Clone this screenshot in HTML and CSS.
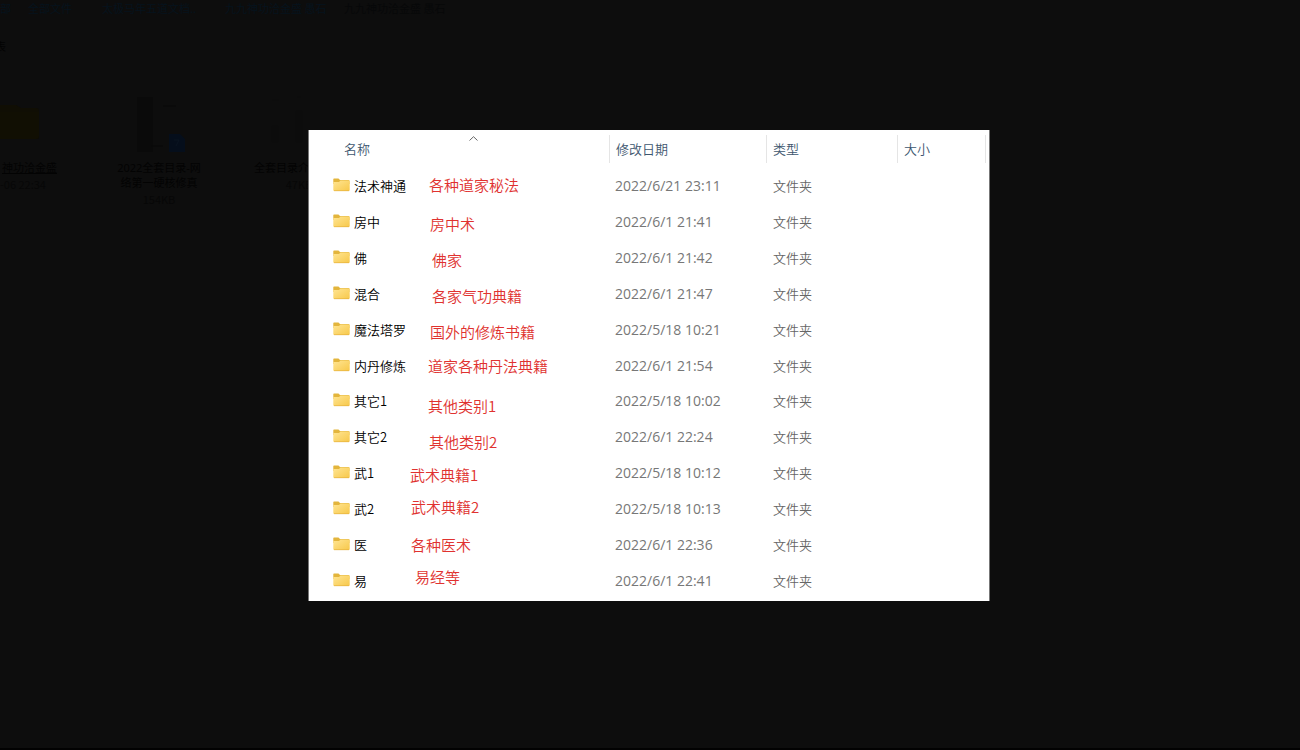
FILE: index.html
```html
<!DOCTYPE html>
<html lang="zh-CN">
<head>
<meta charset="utf-8">
<title>全部文件</title>
<link rel="stylesheet" href="styles.css">
</head>
<body>
<svg class="sprite" aria-hidden="true">
  <defs>
    <linearGradient id="folder-front" x1="0" y1="0" x2="1" y2="1">
      <stop offset="0" stop-color="#ffe593"/>
      <stop offset="1" stop-color="#f7c84a"/>
    </linearGradient>
  </defs>
  <symbol id="folder" viewBox="0 0 17 14">
    <path d="M1 .500h4.500l1.500 1.500H15.500a1 1 0 0 1 1 1V6H.300V1.200Q.300 .500 1 .500z" fill="#e3b53c"/>
    <path d="M.300 4H6L7.500 2.500H16a.700.700 0 0 1 .700.700V12a1 1 0 0 1-1 1H1.300a1 1 0 0 1-1-1z" fill="url(#folder-front)"/>
    <path d="M1 12.700h15" stroke="#e6b23d" stroke-width=".7"/>
  </symbol>
</svg>

<div class="drive">
  <nav class="crumbs" aria-label="路径">
    <a href="#">部</a>
    <a href="#">全部文件</a>
    <a href="#">太极马年五道文档..</a>
    <a href="#">九九神功洽金盛 愚石</a>
    <span>九九神功洽金盛 愚石</span>
  </nav>
  <p class="section">表</p>
  <div class="files">
    <div class="file first">
      <svg class="thumb" viewBox="10 0 60 60" aria-hidden="true"><path d="M8 12Q8 9 11 9H26L31 12H46Q49 12 49 15V40Q49 43 46 43H11Q8 43 8 40z" fill="#100e04"/><path d="M8 16H49V40Q49 43 46 43H11Q8 43 8 40z" fill="#110f03"/></svg>
      <span class="title underlined">神功洽金盛</span>
      <span class="meta">-06 22:34</span>
    </div>
    <div class="file">
      <svg class="thumb" viewBox="0 0 60 60" aria-hidden="true"><path d="M8 1H24V56H8z" fill="#0a0a0a"/><path d="M34 10H47M22 50H34" stroke="#090909"/><path d="M40 38H51L56 43V56H40z" fill="#050e1b"/><path d="M45 44H50L47 50" fill="none" stroke="#0a1421"/></svg>
      <span class="title">2022全套目录-网<br>络第一硬核修真</span>
      <span class="meta">154KB</span>
    </div>
    <div class="file">
      <svg class="thumb" viewBox="0 0 60 60" aria-hidden="true"><path d="M3 4H10M28 1H32M3 30H9V46H3zM27 15H33V46H27z" fill="#0c0c0c" stroke="#0c0c0c"/></svg>
      <span class="title left">全套目录介</span>
      <span class="meta">47KB</span>
    </div>
  </div>
</div>

<main class="overlay">
  <section class="preview" aria-label="文件夹列表">
    <table class="listing">
      <colgroup><col class="c-name"><col class="c-date"><col class="c-type"><col class="c-size"><col></colgroup>
      <thead>
        <tr><th class="name"><span>名称</span></th><th><span>修改日期</span></th><th><span>类型</span></th><th><span>大小</span></th><th><span></span></th></tr>
      </thead>
      <tbody>
        <tr><td class="name"><svg class="icon"><use href="#folder"/></svg>法术神通</td><td>2022/6/21 23:11</td><td>文件夹</td><td></td><td></td></tr>
        <tr><td class="name"><svg class="icon"><use href="#folder"/></svg>房中</td><td>2022/6/1 21:41</td><td>文件夹</td><td></td><td></td></tr>
        <tr><td class="name"><svg class="icon"><use href="#folder"/></svg>佛</td><td>2022/6/1 21:42</td><td>文件夹</td><td></td><td></td></tr>
        <tr><td class="name"><svg class="icon"><use href="#folder"/></svg>混合</td><td>2022/6/1 21:47</td><td>文件夹</td><td></td><td></td></tr>
        <tr><td class="name"><svg class="icon"><use href="#folder"/></svg>魔法塔罗</td><td>2022/5/18 10:21</td><td>文件夹</td><td></td><td></td></tr>
        <tr><td class="name"><svg class="icon"><use href="#folder"/></svg>内丹修炼</td><td>2022/6/1 21:54</td><td>文件夹</td><td></td><td></td></tr>
        <tr><td class="name"><svg class="icon"><use href="#folder"/></svg>其它1</td><td>2022/5/18 10:02</td><td>文件夹</td><td></td><td></td></tr>
        <tr><td class="name"><svg class="icon"><use href="#folder"/></svg>其它2</td><td>2022/6/1 22:24</td><td>文件夹</td><td></td><td></td></tr>
        <tr><td class="name"><svg class="icon"><use href="#folder"/></svg>武1</td><td>2022/5/18 10:12</td><td>文件夹</td><td></td><td></td></tr>
        <tr><td class="name"><svg class="icon"><use href="#folder"/></svg>武2</td><td>2022/5/18 10:13</td><td>文件夹</td><td></td><td></td></tr>
        <tr><td class="name"><svg class="icon"><use href="#folder"/></svg>医</td><td>2022/6/1 22:36</td><td>文件夹</td><td></td><td></td></tr>
        <tr><td class="name"><svg class="icon"><use href="#folder"/></svg>易</td><td>2022/6/1 22:41</td><td>文件夹</td><td></td><td></td></tr>
      </tbody>
    </table>
    <svg class="sort" viewBox="0 0 9 5" aria-hidden="true"><path d="M.500 4.500L4.500.700L8.500 4.500" fill="none" stroke="#666"/></svg>
    <span class="note n1">各种道家秘法</span>
    <span class="note n2">房中术</span>
    <span class="note n3">佛家</span>
    <span class="note n4">各家气功典籍</span>
    <span class="note n5">国外的修炼书籍</span>
    <span class="note n6">道家各种丹法典籍</span>
    <span class="note n7">其他类别1</span>
    <span class="note n8">其他类别2</span>
    <span class="note n9">武术典籍1</span>
    <span class="note n10">武术典籍2</span>
    <span class="note n11">各种医术</span>
    <span class="note n12">易经等</span>
  </section>
</main>
</body>
</html>
```

FILE: styles.css
```css
* { box-sizing: border-box; }

body {
  margin: 0;
  min-height: 100vh;
  background: #0d0d0d;
  border-bottom: 2px solid #020202;
  font-family: "Noto Sans CJK SC", sans-serif;
  font-size: 13px;
  overflow: hidden;
}

.sprite { position: absolute; width: 0; height: 0; }

/* Dimmed page behind the preview */
.drive { color: #030303; }

.crumbs {
  display: grid;
  grid-template-columns: 28px 74px 123px 119px auto;
  height: 16px;
  line-height: 16px;
  font-size: 11px;
  white-space: nowrap;
}
.crumbs a { color: #06131d; text-decoration: none; }
.crumbs span { color: #070809; }

.section {
  margin: 22px 0 42px -5px;
  line-height: 16px;
  font-size: 11px;
}

.files { display: flex; }
.file {
  display: flex;
  flex-direction: column;
  align-items: center;
  width: 140px;
}
.file.first { width: 89px; align-items: flex-start; }
.thumb { width: 60px; height: 60px; margin-bottom: 4px; }
.title {
  width: 90px;
  font-family: "Noto Sans", "Noto Sans CJK SC", sans-serif;
  font-size: 11px;
  line-height: 15px;
  text-align: center;
}
.title.left { text-align: left; }
.title.underlined { padding-left: 2px; text-align: left; text-decoration: underline; }
.meta { margin-top: 2px; line-height: 15px; font-size: 11px; color: #070707; }

/* Preview */
.overlay {
  position: fixed;
  inset: 0;
  display: flex;
  align-items: center;
  justify-content: center;
  padding: 0 2px 19px 0;
}
.preview {
  position: relative;
  width: 682px;
  padding-bottom: 3px;
  background: #fff;
  border-left: 1px solid #777;
  border-right: 1px solid #777;
}

.listing {
  width: 100%;
  height: 468px;
  border-collapse: collapse;
  table-layout: fixed;
}
.c-name { width: 300px; }
.c-date { width: 157px; }
.c-type { width: 131px; }
.c-size { width: 88px; }

.listing th {
  height: 38px;
  padding: 0;
  text-align: left;
  font-weight: 350;
  color: #3d566e;
}
.listing th span {
  display: block;
  height: 28px;
  padding-left: 6px;
  border-left: 1px solid #e5e5e5;
  line-height: 28px;
}
.listing th.name span { padding-left: 35px; border-left: 0; }

.listing td {
  padding: 0 0 0 7px;
  font-weight: 350;
  color: #666;
}
.listing td:nth-child(2) {
  padding-left: 6px;
  font-family: "Open Sans", "Noto Sans", sans-serif;
  font-weight: 400;
  font-size: 14px;
  color: #777;
}
.listing td.name { padding-left: 24px; color: #000; }

.icon {
  width: 17px;
  height: 14px;
  margin-right: 4px;
  vertical-align: -1px;
}

.sort { position: absolute; left: 160px; top: 6px; width: 9px; height: 5px; }

/* Red notes written over the listing */
.note {
  position: absolute;
  font-size: 15px;
  font-weight: 350;
  line-height: 20px;
  color: #e0322f;
  white-space: nowrap;
}
.n1 { left: 120px; top: 45px; }
.n2 { left: 121px; top: 84px; }
.n3 { left: 123px; top: 120px; }
.n4 { left: 123px; top: 156px; }
.n5 { left: 121px; top: 192px; }
.n6 { left: 119px; top: 226px; }
.n7 { left: 119px; top: 266px; }
.n8 { left: 120px; top: 302px; }
.n9 { left: 101px; top: 335px; }
.n10 { left: 102px; top: 367px; }
.n11 { left: 102px; top: 405px; }
.n12 { left: 106px; top: 437px; }
```
